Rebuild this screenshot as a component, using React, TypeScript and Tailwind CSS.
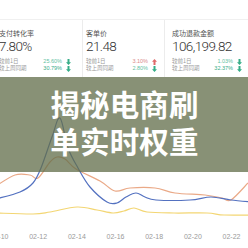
import React from 'react';

type Pt = [number, number];

// catmull-rom -> cubic bezier, for the smooth chart lines
const smooth = (pts: Pt[]) => {
  let d = `M${pts[0][0]},${pts[0][1]}`;
  for (let i = 0; i < pts.length - 1; i++) {
    const p0 = pts[i - 1] || pts[i];
    const p1 = pts[i];
    const p2 = pts[i + 1];
    const p3 = pts[i + 2] || p2;
    const c1x = p1[0] + (p2[0] - p0[0]) / 6;
    const c1y = p1[1] + (p2[1] - p0[1]) / 6;
    const c2x = p2[0] - (p3[0] - p1[0]) / 6;
    const c2y = p2[1] - (p3[1] - p1[1]) / 6;
    d += ` C${c1x},${c1y} ${c2x},${c2y} ${p2[0]},${p2[1]}`;
  }
  return d;
};

const orange: Pt[] = [
  [-4, 186], [15, 175], [30, 175], [38, 178], [50, 162], [57, 157], [65, 159], [76, 169],
  [100, 181], [115, 191], [130, 188], [155, 188], [175, 193], [205, 195], [222, 198],
  [231, 200], [248, 183],
];
const blue: Pt[] = [
  [-4, 199], [20, 192], [33, 183], [41, 168], [52, 137], [60, 118], [68, 148], [78, 168],
  [90, 187], [107, 202], [117, 203], [126, 197], [136, 193], [145, 197], [156, 200],
  [190, 200], [211, 197], [231, 200], [252, 202],
];
const yellow: Pt[] = [
  [-4, 213], [33, 214], [50, 212], [77, 207], [97, 210], [113, 213], [124, 211], [134, 208],
  [147, 212], [174, 213], [207, 213], [224, 215], [252, 215],
];

const days = ['02-10', '02-12', '02-14', '02-16', '02-18', '02-20', '02-22'];

const Arrow = ({ up, color }: { up?: boolean; color: string }) => (
  <svg width="5" height="6" viewBox="0 0 5 6" className="ml-[4px] shrink-0">
    {up ? (
      <path d="M2.5 0 L5 2.8 H3.5 V6 H1.5 V2.8 H0 Z" fill={color} />
    ) : (
      <path d="M2.5 6 L5 3.2 H3.5 V0 H1.5 V3.2 H0 Z" fill={color} />
    )}
  </svg>
);

const stats = [
  {
    label: '支付转化率',
    value: '7.80%',
    day: { v: '25.60%', up: false, c: '#5fbf9f' },
    week: { v: '30.79%', up: false, c: '#36ad88' },
    cls: 'w-[83px] pl-0 pr-[11px] -ml-[1px]',
  },
  {
    label: '客单价',
    value: '21.48',
    day: { v: '3.10%', up: true, c: '#d98a8a' },
    week: { v: '2.80%', up: false, c: '#5fbf9f' },
    cls: 'w-[82px] pl-[3px] pr-[7px] border-l border-[#ececec]',
  },
  {
    label: '成功退款金额',
    value: '106,199.82',
    day: { v: '1.03%', up: false, c: '#5fbf9f' },
    week: { v: '32.37%', up: false, c: '#36ad88' },
    cls: 'flex-1 pl-[7px] pr-[6px] border-l border-[#ececec]',
  },
];

export default function App() {
  return (
    <div className="relative w-[248px] h-[248px] overflow-hidden bg-white font-['Noto_Sans_CJK_SC',sans-serif]">
      <div className="h-[20px] border-b border-[#f0f0f0]" />

      {/* stat cards */}
      <div className="flex h-[57px]">
        {stats.map((s) => (
          <div key={s.label} className={`${s.cls} pt-[9px]`}>
            <div className="text-[7px] leading-[9px] text-[#555] whitespace-nowrap">{s.label}</div>
            <div className="mt-[1px] text-[13.5px] leading-[14px] font-light tracking-[-0.6px] text-[#333] font-['Roboto',sans-serif] whitespace-nowrap">
              {s.value}
            </div>
            <div className="mt-[5px] flex items-center justify-between text-[5.5px] leading-[7px] text-[#9a9a9a] whitespace-nowrap">
              <span>较前1日</span>
              <span className="flex items-center font-['Liberation_Sans',sans-serif]" style={{ color: s.day.c }}>
                {s.day.v}
                <Arrow up={s.day.up} color={s.day.up ? '#e06a6a' : '#36ad88'} />
              </span>
            </div>
            <div className="flex items-center justify-between text-[5.5px] leading-[7px] text-[#9a9a9a] whitespace-nowrap">
              <span>较上周同期</span>
              <span className="flex items-center font-['Liberation_Sans',sans-serif]" style={{ color: s.week.c }}>
                {s.week.v}
                <Arrow color="#36ad88" />
              </span>
            </div>
          </div>
        ))}
      </div>

      {/* trend chart */}
      <svg width="248" height="171" viewBox="0 77 248 171" className="block">
        <path d={smooth(orange)} fill="none" stroke="#eaa987" strokeWidth="1.2" />
        <path d={smooth(blue)} fill="none" stroke="#5371c0" strokeWidth="1.2" />
        <path d={smooth(yellow)} fill="none" stroke="#f3d673" strokeWidth="1.2" />
        {days.map((d, i) => (
          <text
            key={d}
            x={-0.5 + i * 38.67}
            y={238.5}
            textAnchor="middle"
            fontSize="7"
            fill="#9a9a9a"
            fontFamily="Liberation Sans, sans-serif"
          >
            {d}
          </text>
        ))}
      </svg>

      {/* title overlay */}
      <div className="absolute left-0 right-0 top-[77px] h-[95px] bg-[rgba(98,111,75,0.76)] flex flex-col items-center justify-center pb-[6px]">
        <div className="text-white font-bold text-[29.5px] leading-[37px] tracking-[0.2px] pl-[1px]">揭秘电商刷</div>
        <div className="text-white font-bold text-[29.5px] leading-[37px] tracking-[0.2px] pl-[1px]">单实时权重</div>
      </div>
    </div>
  );
}
